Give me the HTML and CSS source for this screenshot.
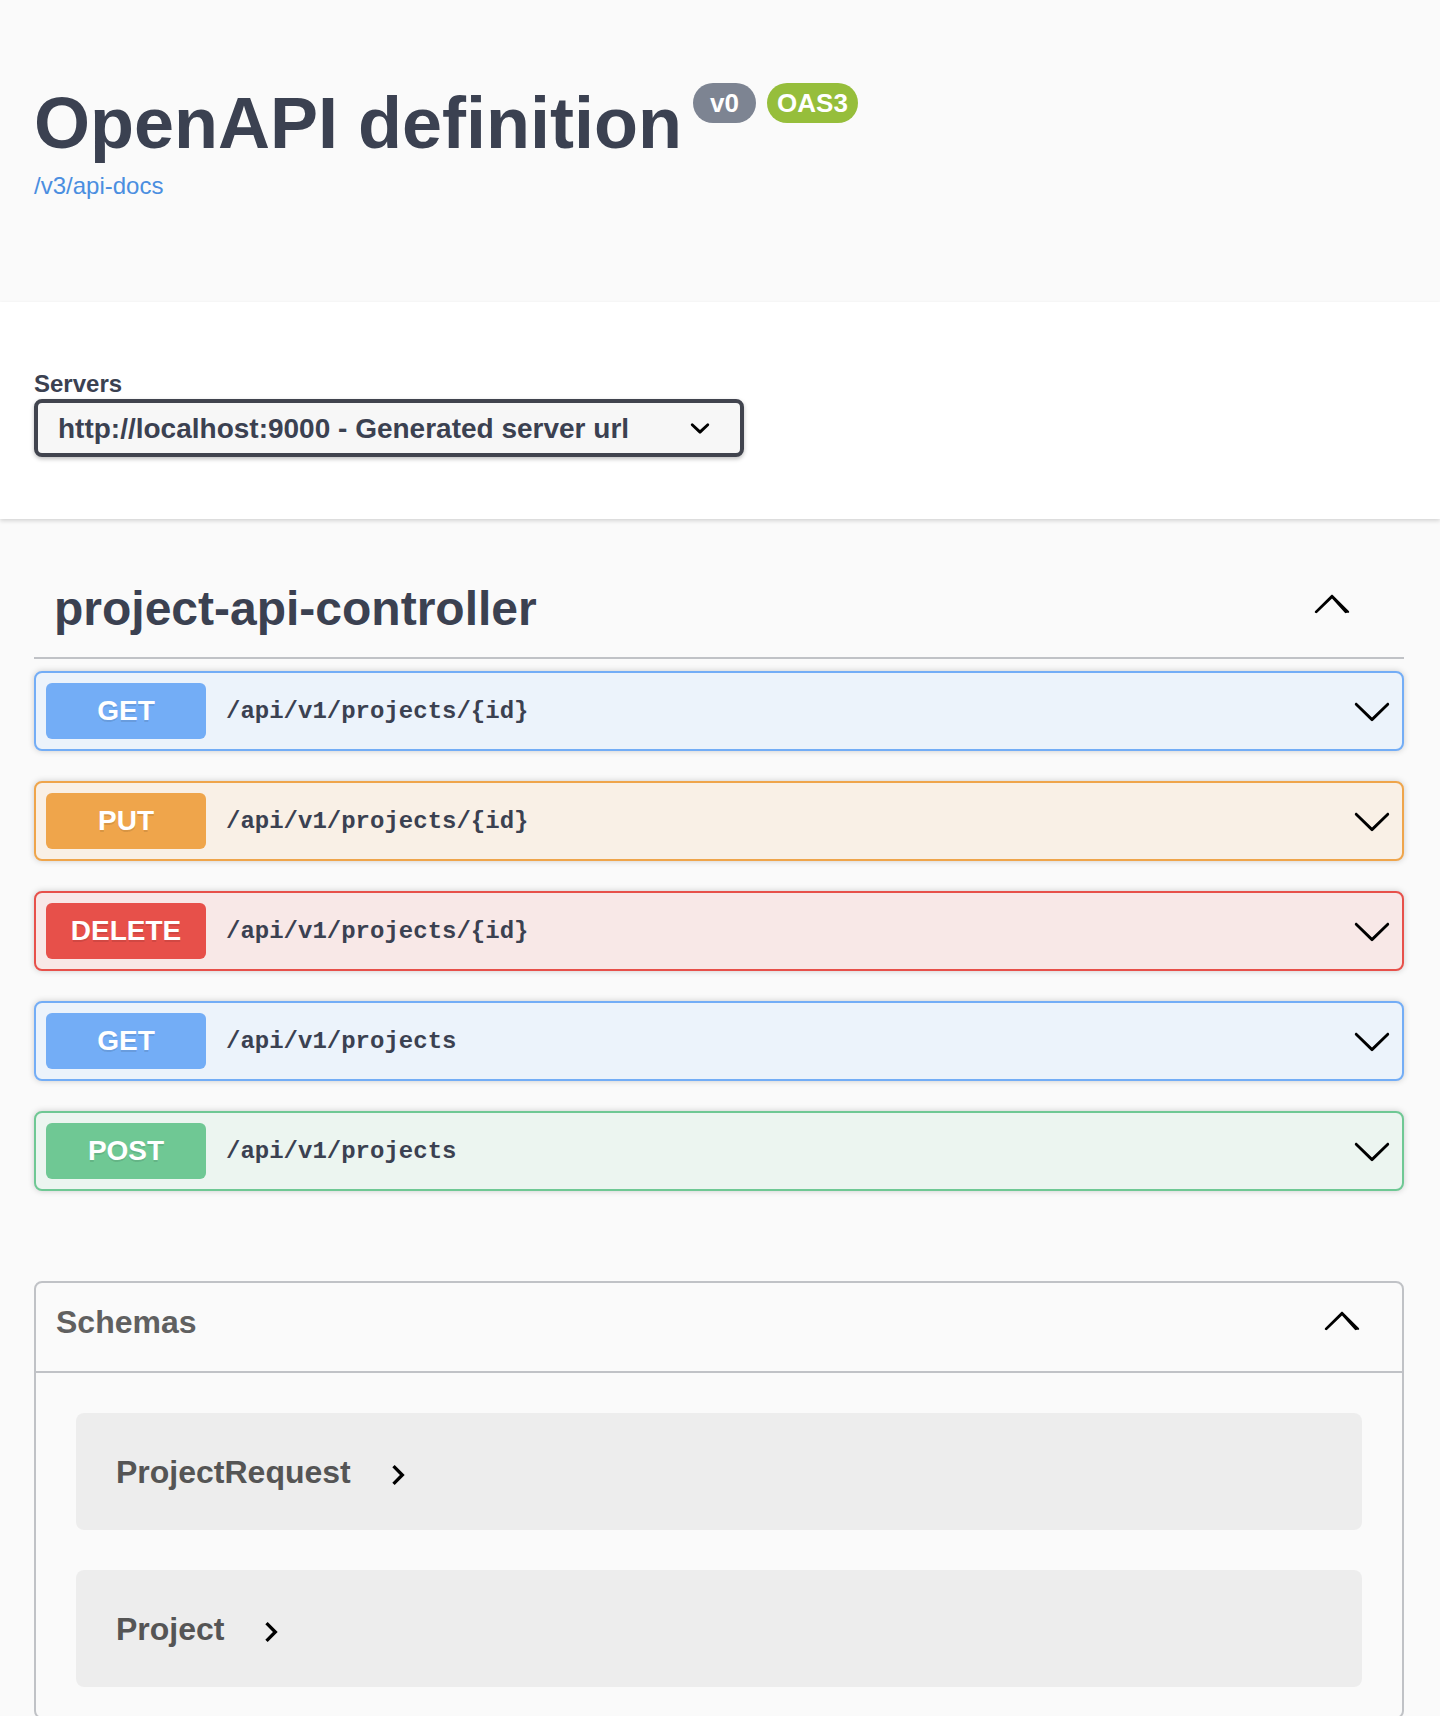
FILE: index.html
```html
<!DOCTYPE html>
<html lang="en">
<head>
<meta charset="utf-8">
<title>Swagger UI</title>
<link rel="stylesheet" href="styles.css">
</head>
<body>
<section class="info">
  <div class="wrap">
    <div class="title-row">
      <h2 class="title">OpenAPI definition</h2>
      <span class="badge badge-version">v0</span>
      <span class="badge badge-oas">OAS3</span>
    </div>
    <a class="spec-link" href="#">/v3/api-docs</a>
  </div>
</section>

<section class="scheme">
  <div class="wrap">
    <span class="servers-label">Servers</span>
    <div class="server-select">
      <span class="server-value">http://localhost:9000 - Generated server url</span>
      <svg class="select-arrow" width="40" height="40" viewBox="0 0 20 20"><path d="M13.418 7.859a.695.695 0 0 1 .978 0 .68.68 0 0 1 0 .969l-3.908 3.83a.697.697 0 0 1-.979 0l-3.908-3.83a.68.68 0 0 1 0-.969.695.695 0 0 1 .978 0L10 11l3.418-3.141z"/></svg>
    </div>
  </div>
</section>

<main class="wrap content">
  <div class="tag">
    <h3 class="tag-name">project-api-controller</h3>
    <svg class="tag-arrow" width="40" height="40" viewBox="0 0 20 20"><path d="M17.418 14.908c-.272.268-.709.268-.979 0L10 7.767l-7.418 7.141c-.272.268-.709.268-.979 0s-.271-.701 0-.969l7.908-7.83c.27-.268.707-.268.979 0l7.908 7.83c.27.268.27.701 0 .969z"/></svg>
  </div>

  <div class="opblocks">
    <div class="opblock op-get">
      <span class="method">GET</span>
      <span class="path">/api/v1/projects/{id}</span>
      <svg class="op-arrow" width="40" height="40" viewBox="0 0 20 20"><path d="M17.418 6.109c.272-.268.709-.268.979 0s.271.701 0 .969l-7.908 7.83c-.27.268-.707.268-.979 0l-7.908-7.83c-.27-.268-.27-.701 0-.969.271-.268.709-.268.979 0L10 13.25l7.418-7.141z"/></svg>
    </div>
    <div class="opblock op-put">
      <span class="method">PUT</span>
      <span class="path">/api/v1/projects/{id}</span>
      <svg class="op-arrow" width="40" height="40" viewBox="0 0 20 20"><path d="M17.418 6.109c.272-.268.709-.268.979 0s.271.701 0 .969l-7.908 7.83c-.27.268-.707.268-.979 0l-7.908-7.83c-.27-.268-.27-.701 0-.969.271-.268.709-.268.979 0L10 13.25l7.418-7.141z"/></svg>
    </div>
    <div class="opblock op-delete">
      <span class="method">DELETE</span>
      <span class="path">/api/v1/projects/{id}</span>
      <svg class="op-arrow" width="40" height="40" viewBox="0 0 20 20"><path d="M17.418 6.109c.272-.268.709-.268.979 0s.271.701 0 .969l-7.908 7.83c-.27.268-.707.268-.979 0l-7.908-7.83c-.27-.268-.27-.701 0-.969.271-.268.709-.268.979 0L10 13.25l7.418-7.141z"/></svg>
    </div>
    <div class="opblock op-get">
      <span class="method">GET</span>
      <span class="path">/api/v1/projects</span>
      <svg class="op-arrow" width="40" height="40" viewBox="0 0 20 20"><path d="M17.418 6.109c.272-.268.709-.268.979 0s.271.701 0 .969l-7.908 7.83c-.27.268-.707.268-.979 0l-7.908-7.83c-.27-.268-.27-.701 0-.969.271-.268.709-.268.979 0L10 13.25l7.418-7.141z"/></svg>
    </div>
    <div class="opblock op-post">
      <span class="method">POST</span>
      <span class="path">/api/v1/projects</span>
      <svg class="op-arrow" width="40" height="40" viewBox="0 0 20 20"><path d="M17.418 6.109c.272-.268.709-.268.979 0s.271.701 0 .969l-7.908 7.83c-.27.268-.707.268-.979 0l-7.908-7.83c-.27-.268-.27-.701 0-.969.271-.268.709-.268.979 0L10 13.25l7.418-7.141z"/></svg>
    </div>
  </div>

  <section class="models">
    <h4 class="models-head">
      <span class="models-title">Schemas</span>
      <svg class="models-arrow" width="40" height="40" viewBox="0 0 20 20"><path d="M17.418 14.908c-.272.268-.709.268-.979 0L10 7.767l-7.418 7.141c-.272.268-.709.268-.979 0s-.271-.701 0-.969l7.908-7.83c.27-.268.707-.268.979 0l7.908 7.83c.27.268.27.701 0 .969z"/></svg>
    </h4>
    <div class="models-body">
      <div class="model">
        <span class="model-title">ProjectRequest</span>
        <svg class="model-toggle" width="40" height="40" viewBox="0 0 24 24"><path d="M10 6 8.59 7.41 13.17 12l-4.58 4.59L10 18l6-6z"/></svg>
      </div>
      <div class="model">
        <span class="model-title">Project</span>
        <svg class="model-toggle" width="40" height="40" viewBox="0 0 24 24"><path d="M10 6 8.59 7.41 13.17 12l-4.58 4.59L10 18l6-6z"/></svg>
      </div>
    </div>
  </section>
</main>
</body>
</html>
```

FILE: styles.css
```css
* {
  box-sizing: border-box;
}

html, body {
  margin: 0;
  padding: 0;
  background: #fafafa;
}

body {
  font-family: "Liberation Sans", Arial, Helvetica, sans-serif;
  color: #3b4151;
}

.wrap {
  padding: 0 36px 0 34px;
}

/* ---------- info ---------- */
.info {
  padding: 82px 0 102px;
  background: #fafafa;
}

.title-row {
  display: flex;
  align-items: flex-start;
}

.title {
  margin: 0;
  font-size: 72px;
  line-height: 83px;
  font-weight: 700;
  color: #3b4151;
}

.badge {
  display: inline-block;
  height: 40px;
  margin-top: 1px;
  padding-top: 1px;
  border-radius: 57px;
  color: #fff;
  font-size: 26px;
  font-weight: 700;
  line-height: 38px;
  text-align: center;
}

.badge-version {
  width: 63px;
  margin-left: 11px;
  background: #7d8492;
}

.badge-oas {
  width: 91px;
  margin-left: 11px;
  background: #96be3b;
}

.spec-link {
  display: inline-block;
  margin-top: 7px;
  font-size: 24px;
  line-height: 28px;
  color: #4a8ee0;
  text-decoration: none;
}

/* ---------- servers ---------- */
.scheme {
  background: #fff;
  box-shadow: 0 2px 4px 0 rgba(0, 0, 0, .15);
  padding: 60px 0 62px;
}

.servers-label {
  display: block;
  margin-top: 7px;
  font-size: 24px;
  line-height: 30px;
  font-weight: 700;
  color: #3b4151;
}

.server-select {
  display: flex;
  align-items: center;
  justify-content: space-between;
  width: 710px;
  height: 58px;
  padding: 2px 20px 0;
  border: 4px solid #41444e;
  border-radius: 8px;
  background: #f7f7f7;
  box-shadow: 0 2px 4px 0 rgba(0, 0, 0, .25);
  font-size: 28px;
  font-weight: 700;
  color: #3b4151;
}

.select-arrow {
  flex: none;
  margin-top: -2px;
  fill: #000;
}

/* ---------- operations ---------- */
.content {
  display: flex;
  flex-direction: column;
  padding-top: 42px;
}

.tag {
  display: flex;
  align-items: center;
  padding: 20px 40px 20px 20px;
  min-height: 98px;
  border-bottom: 2px solid rgba(59, 65, 81, .3);
  margin-bottom: 12px;
}

.tag-name {
  flex: 1;
  margin: 0;
  font-size: 48px;
  line-height: 56px;
  font-weight: 700;
  color: #3b4151;
}

.tag-arrow {
  flex: none;
  align-self: flex-start;
  margin-top: 2px;
  margin-right: 12px;
  fill: #000;
}

.opblocks {
  display: flex;
  flex-direction: column;
}

.opblock {
  display: flex;
  align-items: center;
  height: 80px;
  padding: 10px;
  margin-bottom: 30px;
  border: 2px solid #000;
  border-radius: 8px;
  box-shadow: 0 0 6px rgba(0, 0, 0, .19);
}

.method {
  flex: none;
  width: 160px;
  height: 56px;
  border-radius: 6px;
  color: #fff;
  font-size: 28px;
  font-weight: 700;
  line-height: 56px;
  text-align: center;
  text-shadow: 0 2px 0 rgba(0, 0, 0, .1);
}

.path {
  flex: 1;
  padding: 0 20px;
  font-family: "Liberation Mono", "Courier New", monospace;
  font-size: 24px;
  font-weight: 700;
  color: #3b4151;
}

.op-arrow {
  flex: none;
  fill: #000;
}

.op-get {
  border-color: #73adf6;
  background: #ecf3fb;
}
.op-get .method {
  background: #73adf6;
}

.op-put {
  border-color: #efa54b;
  background: #f9f0e6;
}
.op-put .method {
  background: #efa54b;
}

.op-delete {
  border-color: #e7504a;
  background: #f8e8e7;
}
.op-delete .method {
  background: #e7504a;
}

.op-post {
  border-color: #6fc894;
  background: #ecf5f0;
}
.op-post .method {
  background: #6fc894;
}

/* ---------- schemas ---------- */
.models {
  margin: 60px 0 60px;
  border: 2px solid rgba(59, 65, 81, .3);
  border-radius: 8px;
}

.models-head {
  display: flex;
  align-items: flex-start;
  margin: 0;
  height: 90px;
  padding: 21px 40px 19px 20px;
  border-bottom: 2px solid rgba(59, 65, 81, .3);
  font-size: 32px;
  font-weight: 700;
  color: #606060;
}

.models-title {
  flex: 1;
  line-height: 37px;
}

.models-arrow {
  flex: none;
  margin-top: -4px;
  fill: #000;
}

.models-body {
  padding: 40px 40px 30px;
  display: flex;
  flex-direction: column;
  gap: 40px;
}

.model {
  display: flex;
  align-items: center;
  height: 117px;
  padding: 1px 40px 0;
  border-radius: 8px;
  background: rgba(0, 0, 0, .05);
}

.model-title {
  font-size: 32px;
  font-weight: 700;
  line-height: 37px;
  color: #555;
}

.model-toggle {
  flex: none;
  margin-left: 27px;
  margin-top: 6px;
  fill: #000;
}
```
